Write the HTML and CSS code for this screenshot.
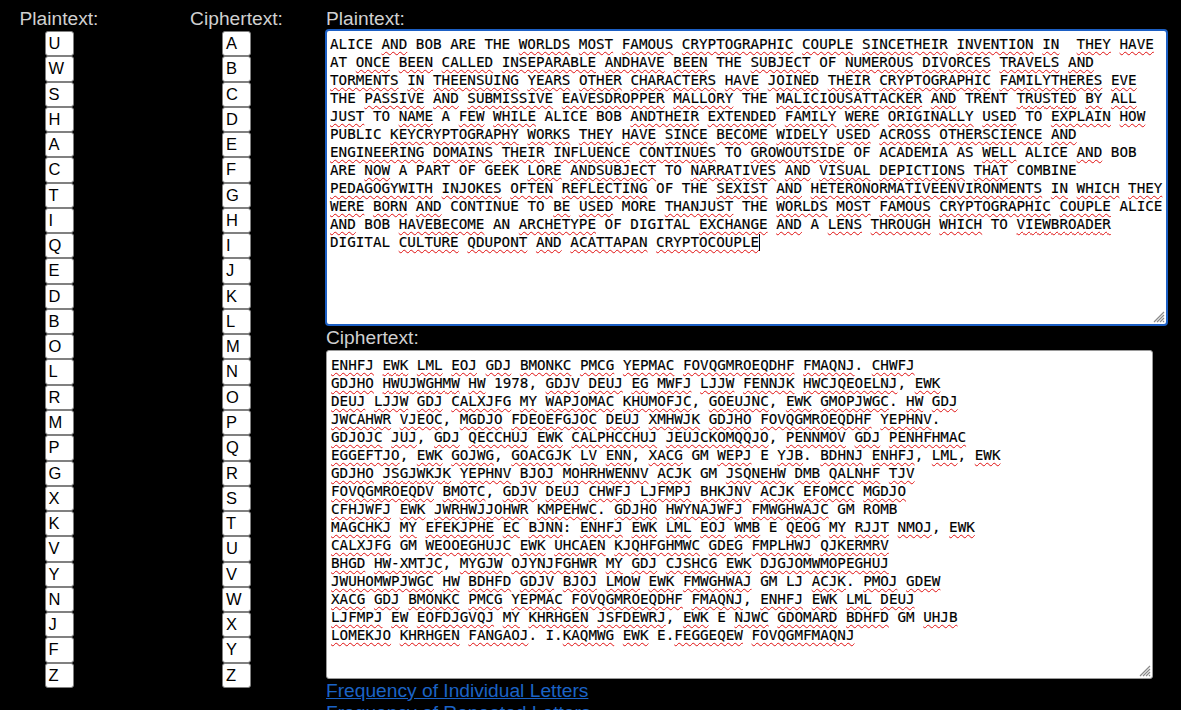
FILE: index.html
```html
<!DOCTYPE html>
<html lang="en">
<head>
<meta charset="utf-8">
<title>Substitution Cipher</title>
<link rel="stylesheet" href="styles.css">
</head>
<body>
<div class="page">
  <div class="col col-plain">
    <div class="label">Plaintext:</div>
    <div class="boxes">
      <div class="box">U</div><div class="box">W</div><div class="box">S</div><div class="box">H</div><div class="box">A</div><div class="box">C</div><div class="box">T</div><div class="box">I</div><div class="box">Q</div><div class="box">E</div><div class="box">D</div><div class="box">B</div><div class="box">O</div><div class="box">L</div><div class="box">R</div><div class="box">M</div><div class="box">P</div><div class="box">G</div><div class="box">X</div><div class="box">K</div><div class="box">V</div><div class="box">Y</div><div class="box">N</div><div class="box">J</div><div class="box">F</div><div class="box">Z</div>
    </div>
  </div>
  <div class="col col-cipher">
    <div class="label">Ciphertext:</div>
    <div class="boxes">
      <div class="box">A</div><div class="box">B</div><div class="box">C</div><div class="box">D</div><div class="box">E</div><div class="box">F</div><div class="box">G</div><div class="box">H</div><div class="box">I</div><div class="box">J</div><div class="box">K</div><div class="box">L</div><div class="box">M</div><div class="box">N</div><div class="box">O</div><div class="box">P</div><div class="box">Q</div><div class="box">R</div><div class="box">S</div><div class="box">T</div><div class="box">U</div><div class="box">V</div><div class="box">W</div><div class="box">X</div><div class="box">Y</div><div class="box">Z</div>
    </div>
  </div>
  <div class="main">
    <div class="label label-main">Plaintext:</div>
    <div class="ta ta-plain"><div class="mono">ALICE <u>AND</u> BOB ARE THE <u>WORLDS</u> <u>MOST</u> <u>FAMOUS</u> <u>CRYPTOGRAPHIC</u> <u>COUPLE</u> <u>SINCETHEIR</u> <u>INVENTION</u> <u>IN</u>  <u>THEY</u> <u>HAVE</u>
AT <u>ONCE</u> <u>BEEN</u> <u>CALLED</u> <u>INSEPARABLE</u> <u>ANDHAVE</u> <u>BEEN</u> THE <u>SUBJECT</u> OF <u>NUMEROUS</u> <u>DIVORCES</u> <u>TRAVELS</u> <u>AND</u>
<u>TORMENTS</u> <u>IN</u> <u>THEENSUING</u> <u>YEARS</u> <u>OTHER</u> <u>CHARACTERS</u> <u>HAVE</u> <u>JOINED</u> <u>THEIR</u> <u>CRYPTOGRAPHIC</u> <u>FAMILYTHERES</u> <u>EVE</u>
THE <u>PASSIVE</u> <u>AND</u> <u>SUBMISSIVE</u> <u>EAVESDROPPER</u> <u>MALLORY</u> THE <u>MALICIOUSATTACKER</u> <u>AND</u> TRENT <u>TRUSTED</u> <u>BY</u> <u>ALL</u>
<u>JUST</u> TO <u>NAME</u> A <u>FEW</u> <u>WHILE</u> ALICE BOB <u>ANDTHEIR</u> <u>EXTENDED</u> <u>FAMILY</u> <u>WERE</u> <u>ORIGINALLY</u> <u>USED</u> TO <u>EXPLAIN</u> <u>HOW</u>
PUBLIC <u>KEYCRYPTOGRAPHY</u> <u>WORKS</u> <u>THEY</u> <u>HAVE</u> <u>SINCE</u> <u>BECOME</u> <u>WIDELY</u> <u>USED</u> <u>ACROSS</u> <u>OTHERSCIENCE</u> <u>AND</u>
<u>ENGINEERING</u> <u>DOMAINS</u> <u>THEIR</u> <u>INFLUENCE</u> <u>CONTINUES</u> TO <u>GROWOUTSIDE</u> OF ACADEMIA AS <u>WELL</u> ALICE <u>AND</u> BOB
ARE <u>NOW</u> A PART OF GEEK <u>LORE</u> <u>ANDSUBJECT</u> TO <u>NARRATIVES</u> <u>AND</u> <u>VISUAL</u> <u>DEPICTIONS</u> <u>THAT</u> COMBINE
<u>PEDAGOGYWITH</u> <u>INJOKES</u> <u>OFTEN</u> <u>REFLECTING</u> OF THE <u>SEXIST</u> <u>AND</u> <u>HETERONORMATIVEENVIRONMENTS</u> <u>IN</u> <u>WHICH</u> <u>THEY</u>
<u>WERE</u> <u>BORN</u> <u>AND</u> CONTINUE TO <u>BE</u> <u>USED</u> MORE <u>THANJUST</u> THE <u>WORLDS</u> <u>MOST</u> <u>FAMOUS</u> <u>CRYPTOGRAPHIC</u> <u>COUPLE</u> ALICE
<u>AND</u> BOB <u>HAVEBECOME</u> AN <u>ARCHETYPE</u> OF DIGITAL <u>EXCHANGE</u> <u>AND</u> A <u>LENS</u> <u>THROUGH</u> <u>WHICH</u> TO <u>VIEWBROADER</u>
DIGITAL <u>CULTURE</u> <u>QDUPONT</u> <u>AND</u> <u>ACATTAPAN</u> <u>CRYPTOCOUPLE</u><span class="caret"></span></div><svg class="grip" viewBox="0 0 14 14" width="14" height="14"><path d="M13 3 L3 13 M13 6 L6 13 M13 9 L9 13 M13 12 L12 13" stroke="#8a8a8a" stroke-width="1.2" fill="none"/></svg></div>
    <div class="label label-cipher">Ciphertext:</div>
    <div class="ta ta-cipher"><div class="mono"><u>ENHFJ</u> <u>EWK</u> <u>LML</u> <u>EOJ</u> <u>GDJ</u> <u>BMONKC</u> <u>PMCG</u> <u>YEPMAC</u> <u>FOVQGMROEQDHF</u> <u>FMAQNJ</u>. <u>CHWFJ</u>
<u>GDJHO</u> <u>HWUJWGHMW</u> <u>HW</u> 1978, <u>GDJV</u> <u>DEUJ</u> <u>EG</u> <u>MWFJ</u> <u>LJJW</u> <u>FENNJK</u> <u>HWCJQEOELNJ</u>, <u>EWK</u>
<u>DEUJ</u> <u>LJJW</u> <u>GDJ</u> <u>CALXJFG</u> <u>MY</u> <u>WAPJOMAC</u> <u>KHUMOFJC</u>, <u>GOEUJNC</u>, <u>EWK</u> <u>GMOPJWGC</u>. <u>HW</u> <u>GDJ</u>
<u>JWCAHWR</u> <u>VJEOC</u>, <u>MGDJO</u> <u>FDEOEFGJOC</u> <u>DEUJ</u> <u>XMHWJK</u> <u>GDJHO</u> <u>FOVQGMROEQDHF</u> <u>YEPHNV</u>.
<u>GDJOJC</u> <u>JUJ</u>, <u>GDJ</u> <u>QECCHUJ</u> <u>EWK</u> <u>CALPHCCHUJ</u> <u>JEUJCKOMQQJO</u>, <u>PENNMOV</u> <u>GDJ</u> <u>PENHFHMAC</u>
<u>EGGEFTJO</u>, <u>EWK</u> <u>GOJWG</u>, <u>GOACGJK</u> <u>LV</u> <u>ENN</u>, <u>XACG</u> GM <u>WEPJ</u> E <u>YJB</u>. <u>BDHNJ</u> <u>ENHFJ</u>, <u>LML</u>, <u>EWK</u>
<u>GDJHO</u> <u>JSGJWKJK</u> <u>YEPHNV</u> <u>BJOJ</u> <u>MOHRHWENNV</u> <u>ACJK</u> GM <u>JSQNEHW</u> <u>DMB</u> <u>QALNHF</u> <u>TJV</u>
<u>FOVQGMROEQDV</u> <u>BMOTC</u>, <u>GDJV</u> <u>DEUJ</u> <u>CHWFJ</u> <u>LJFMPJ</u> <u>BHKJNV</u> <u>ACJK</u> <u>EFOMCC</u> <u>MGDJO</u>
<u>CFHJWFJ</u> <u>EWK</u> <u>JWRHWJJOHWR</u> <u>KMPEHWC</u>. <u>GDJHO</u> <u>HWYNAJWFJ</u> <u>FMWGHWAJC</u> GM ROMB
<u>MAGCHKJ</u> <u>MY</u> <u>EFEKJPHE</u> <u>EC</u> <u>BJNN</u>: <u>ENHFJ</u> <u>EWK</u> <u>LML</u> <u>EOJ</u> <u>WMB</u> E <u>QEOG</u> <u>MY</u> <u>RJJT</u> <u>NMOJ</u>, <u>EWK</u>
<u>CALXJFG</u> GM <u>WEOOEGHUJC</u> <u>EWK</u> <u>UHCAEN</u> <u>KJQHFGHMWC</u> <u>GDEG</u> <u>FMPLHWJ</u> <u>QJKERMRV</u>
<u>BHGD</u> <u>HW-XMTJC</u>, <u>MYGJW</u> <u>OJYNJFGHWR</u> <u>MY</u> <u>GDJ</u> <u>CJSHCG</u> <u>EWK</u> <u>DJGJOMWMOPEGHUJ</u>
<u>JWUHOMWPJWGC</u> <u>HW</u> <u>BDHFD</u> <u>GDJV</u> <u>BJOJ</u> <u>LMOW</u> <u>EWK</u> <u>FMWGHWAJ</u> GM LJ <u>ACJK</u>. <u>PMOJ</u> <u>GDEW</u>
<u>XACG</u> <u>GDJ</u> <u>BMONKC</u> <u>PMCG</u> <u>YEPMAC</u> <u>FOVQGMROEQDHF</u> <u>FMAQNJ</u>, <u>ENHFJ</u> <u>EWK</u> <u>LML</u> <u>DEUJ</u>
<u>LJFMPJ</u> <u>EW</u> <u>EOFDJGVQJ</u> <u>MY</u> <u>KHRHGEN</u> <u>JSFDEWRJ</u>, <u>EWK</u> E <u>NJWC</u> <u>GDOMARD</u> <u>BDHFD</u> GM <u>UHJB</u>
<u>LOMEKJO</u> <u>KHRHGEN</u> <u>FANGAOJ</u>. I.<u>KAQMWG</u> <u>EWK</u> E.<u>FEGGEQEW</u> <u>FOVQGMFMAQNJ</u></div><svg class="grip" viewBox="0 0 14 14" width="14" height="14"><path d="M13 3 L3 13 M13 6 L6 13 M13 9 L9 13 M13 12 L12 13" stroke="#8a8a8a" stroke-width="1.2" fill="none"/></svg></div>
    <div class="links">
      <a class="link" href="#">Frequency of Individual Letters</a>
      <a class="link" href="#">Frequency of Repeated Letters</a>
    </div>
  </div>
</div>
</body>
</html>
```
FILE: styles.css
```css
html, body {
  margin: 0;
  padding: 0;
  background: #000;
  overflow: hidden;
}

.page {
  display: flex;
  align-items: flex-start;
  padding-top: 8px;
}

.col {
  display: flex;
  flex-direction: column;
  align-items: center;
}

.col-plain {
  width: 118px;
}

.col-cipher {
  width: 177px;
  margin-left: 30px;
}

.label {
  color: #d0d0d0;
  font-family: "Liberation Sans", Arial, sans-serif;
  font-size: 19.2px;
  line-height: 21px;
  white-space: nowrap;
}

.boxes {
  margin-top: 2px;
  display: flex;
  flex-direction: column;
}

.box {
  box-sizing: border-box;
  width: 29px;
  height: 25.27px;
  background: #fff;
  border: 1px solid #808080;
  border-radius: 3px;
  padding-left: 3px;
  color: #000;
  font-family: "Liberation Sans", Arial, sans-serif;
  font-size: 16.5px;
  line-height: 23px;
}

.main {
  display: flex;
  flex-direction: column;
  width: 843px;
}

.label-main {
  padding-left: 1px;
}

.label-cipher {
  padding-left: 1px;
  line-height: 24px;
}

.ta {
  position: relative;
  box-sizing: border-box;
  background: #fff;
  overflow: hidden;
}

.ta-plain {
  height: 297px;
  border: 2px solid #1c5fc4;
  border-radius: 4px;
  padding: 4px 3px;
}

.ta-cipher {
  width: 827px;
  margin-left: 1px;
  height: 329px;
  border: 1px solid #9a9a9a;
  border-radius: 3px;
  padding: 5px 4px;
}

.mono {
  font-family: "DejaVu Sans Mono", "Liberation Mono", monospace;
  font-size: 14.26px;
  line-height: 18px;
  white-space: pre;
  color: #000;
  -webkit-text-stroke: 0.15px #000;
}

.mono u {
  text-decoration-line: underline;
  text-decoration-style: wavy;
  text-decoration-color: #e01010;
  text-decoration-thickness: 1.2px;
  text-decoration-skip-ink: none;
  text-underline-offset: 2px;
}

.caret {
  display: inline-block;
  width: 1px;
  height: 17px;
  background: #000;
  vertical-align: -4px;
}

.grip {
  position: absolute;
  right: 1px;
  bottom: 1px;
}

.links {
  display: flex;
  flex-direction: column;
  align-items: flex-start;
  padding-left: 1px;
  margin-top: 1px;
}

.link {
  color: #1b63c6;
  font-family: "Liberation Sans", Arial, sans-serif;
  font-size: 19.2px;
  line-height: 22px;
  text-decoration: underline;
}
```
